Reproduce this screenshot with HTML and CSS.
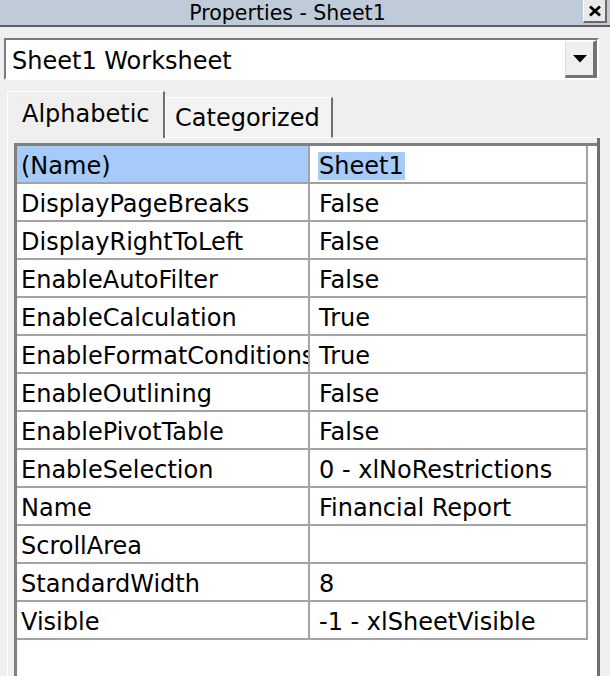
FILE: index.html
```html
<!DOCTYPE html>
<html lang="en">
<head>
  <meta charset="UTF-8" />
  <title>Properties - Sheet1</title>
  <meta name="viewport" content="width=device-width, initial-scale=1" />
  <link rel="stylesheet" href="styles.css">
</head>
<body>
  <div class="window">
    <header class="titlebar">
      <span class="title">Properties - Sheet1</span>
      <span class="close">
        <svg width="14" height="12" viewBox="0 0 14 12">
          <path d="M2 1.5 L12 10.5 M12 1.5 L2 10.5" stroke="#000" stroke-width="2.8" fill="none" />
        </svg>
      </span>
    </header>

    <div class="body">
      <!-- Object selector -->
      <div class="combo">
        <span class="combo-text">Sheet1 Worksheet</span>
        <span class="combo-btn">
          <svg width="14" height="8" viewBox="0 0 14 8"><path d="M0 0 H14 L7 7.5 Z" fill="#000" /></svg>
        </span>
      </div>

      <div class="tabs">
        <div class="tab active">Alphabetic</div>
        <div class="tab">Categorized</div>
        <div class="tab-fill"></div>
      </div>

      <div class="panel">
        <div class="grid">
          <div class="row selected"><div class="cell name">(Name)</div><div class="cell value"><span class="sel">Sheet1</span></div></div>
          <div class="row"><div class="cell name">DisplayPageBreaks</div><div class="cell value">False</div></div>
          <div class="row"><div class="cell name">DisplayRightToLeft</div><div class="cell value">False</div></div>
          <div class="row"><div class="cell name">EnableAutoFilter</div><div class="cell value">False</div></div>
          <div class="row"><div class="cell name">EnableCalculation</div><div class="cell value">True</div></div>
          <div class="row"><div class="cell name">EnableFormatConditionsCalculation</div><div class="cell value">True</div></div>
          <div class="row"><div class="cell name">EnableOutlining</div><div class="cell value">False</div></div>
          <div class="row"><div class="cell name">EnablePivotTable</div><div class="cell value">False</div></div>
          <div class="row"><div class="cell name">EnableSelection</div><div class="cell value">0 - xlNoRestrictions</div></div>
          <div class="row"><div class="cell name">Name</div><div class="cell value">Financial Report</div></div>
          <div class="row"><div class="cell name">ScrollArea</div><div class="cell value"></div></div>
          <div class="row"><div class="cell name">StandardWidth</div><div class="cell value">8</div></div>
          <div class="row"><div class="cell name">Visible</div><div class="cell value">-1 - xlSheetVisible</div></div>
        </div>
      </div>
    </div>
  </div>
</body>
</html>
```

FILE: styles.css
```css
html, body {
  margin: 0;
  height: 100%;
  overflow: hidden;
}
body {
  font-family: 'DejaVu Sans', 'Liberation Sans', sans-serif;
  background: #efefef;
  color: #000;
}
.window {
  display: flex;
  flex-direction: column;
  height: 100%;
}

/* Title bar */
.titlebar {
  display: flex;
  align-items: flex-start;
  height: 25px;
  background: #bfcbd8;
  border-bottom: 2px solid #5e5e5e;
}
.title {
  flex: 1;
  text-align: center;
  font-size: 20.5px;
  line-height: 27px;
  height: 25px;
  overflow: hidden;
  padding-right: 8px;
}
.close {
  width: 21px;
  height: 21px;
  margin-right: 3px;
  background: #e9e9e9;
  border-left: 1px solid #fff;
  border-right: 2px solid #6a6a6a;
  border-bottom: 2px solid #6a6a6a;
  display: flex;
  justify-content: center;
  align-items: center;
}

.body {
  flex: 1;
  display: flex;
  flex-direction: column;
  min-height: 0;
}

/* Combo box */
.combo {
  display: flex;
  height: 38px;
  margin: 11px 11px 0 4px;
  background: #fff;
  border: 2px solid;
  border-color: #7b7b7b #fff #fff #7b7b7b;
}
.combo-text {
  flex: 1;
  font-size: 24px;
  line-height: 43px;
  height: 38px;
  overflow: hidden;
  padding-left: 6px;
}
.combo-btn {
  width: 27px;
  background: #efefef;
  border-left: 1px solid #dcdcdc;
  border-top: 2px solid #fff;
  border-right: 4px solid #747474;
  border-bottom: 3px solid #747474;
  display: flex;
  justify-content: center;
  align-items: center;
}

/* Tabs */
.tabs {
  display: flex;
  align-items: flex-end;
  margin: 11px 10px 0 7px;
}
.tab {
  font-size: 24px;
  background: #efefef;
  border-top: 1px solid #fff;
  border-left: 1px solid #fff;
  border-right: 2px solid #6f6f6f;
}
.tab.active {
  height: 46px;
  line-height: 44px;
  padding-left: 14px;
  width: 141px;
}
.tab:not(.active) {
  height: 39px;
  line-height: 40px;
  padding-left: 9px;
  width: 156px;
  background: #f3f3f3;
  border-bottom: 1px solid #fff;
}
.tab-fill {
  flex: 1;
  border-bottom: 1px solid #fff;
}

/* Property grid */
.panel {
  flex: 1;
  margin: 0 10px 0 7px;
  padding: 5px 0 0 6px;
  border-left: 1px solid #fff;
  border-right: 3px solid #6f6f6f;
  display: flex;
}
.grid {
  flex: 1;
  background: #fff;
  border-top: 3px solid #7f7f7f;
  border-left: 3px solid #7f7f7f;
}
.row {
  display: grid;
  grid-template-columns: 293px 278px;
}
.cell {
  height: 36px;
  font-size: 24px;
  line-height: 40px;
  white-space: nowrap;
  overflow: hidden;
  border-right: 2px solid #a3a3a3;
  border-bottom: 2px solid #a3a3a3;
}
.name {
  padding-left: 4px;
}
.value {
  padding-left: 8px;
}
.value:not(:has(.sel)) {
  padding-left: 9px;
}
.selected .name {
  background: #a6cbf8;
}
.sel {
  background: #a6cbf8;
  padding: 0 1px;
}
```
